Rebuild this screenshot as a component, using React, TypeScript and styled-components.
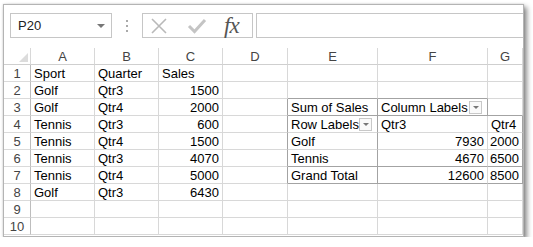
import React from 'react';
import styled, { createGlobalStyle } from 'styled-components';

const GlobalStyle = createGlobalStyle`
  body {
    margin: 0;
    background: #ffffff;
    font-family: "Liberation Sans", Arial, sans-serif;
  }
`;

type Value = string | number | { text: string; filter: true };

const columns = ['A', 'B', 'C', 'D', 'E', 'F', 'G'];
const widths = [64, 64, 64, 65, 90, 110, 35];

const rows: Value[][] = [
  ['Sport', 'Quarter', 'Sales', '', '', '', ''],
  ['Golf', 'Qtr3', 1500, '', '', '', ''],
  ['Golf', 'Qtr4', 2000, '', 'Sum of Sales', { text: 'Column Labels', filter: true }, ''],
  ['Tennis', 'Qtr3', 600, '', { text: 'Row Labels', filter: true }, 'Qtr3', 'Qtr4'],
  ['Tennis', 'Qtr4', 1500, '', 'Golf', 7930, 2000],
  ['Tennis', 'Qtr3', 4070, '', 'Tennis', 4670, 6500],
  ['Tennis', 'Qtr4', 5000, '', 'Grand Total', 12600, 8500],
  ['Golf', 'Qtr3', 6430, '', '', '', ''],
  ['', '', '', '', '', '', ''],
  ['', '', '', '', '', '', ''],
];

// pivot table outline
const darkBottom = (r: number, c: number) =>
  (r === 2 && (c === 4 || c === 5)) || ((r === 3 || r === 6 || r === 7) && c >= 4);
const darkRight = (r: number, c: number) =>
  ((c === 3 || c === 4) && r >= 3 && r <= 7) || (c === 5 && r === 3) || (c === 6 && r >= 4 && r <= 7);

export default function App() {
  return (
    <>
      <GlobalStyle />
      <Window>
        <Toolbar>
          <NameBox>
            <span>P20</span>
            <Caret />
          </NameBox>
          <Grip>
            <i />
            <i />
            <i />
          </Grip>
          <FormulaButtons>
            <svg width="18" height="18" viewBox="0 0 18 18">
              <path d="M2 2 L16 16 M16 2 L2 16" stroke="#b9b9b9" strokeWidth="1.6" fill="none" />
            </svg>
            <svg width="20" height="16" viewBox="0 0 20 16">
              <path d="M2 8 L7.5 13.5 L18 2" stroke="#c4c4c4" strokeWidth="3" fill="none" />
            </svg>
            <Fx>fx</Fx>
          </FormulaButtons>
          <FormulaInput />
        </Toolbar>
        <Sheet $widths={widths}>
          <Corner>
            <CornerMark />
          </Corner>
          {columns.map((c) => (
            <ColHead key={c}>{c}</ColHead>
          ))}
          {rows.map((row, r) => (
            <React.Fragment key={r}>
              <RowHead>{r + 1}</RowHead>
              {row.map((v, c) => {
                const isNum = typeof v === 'number';
                const filter = typeof v === 'object';
                return (
                  <Cell
                    key={c}
                    $num={isNum}
                    $darkB={darkBottom(r + 1, c)}
                    $darkR={darkRight(r + 1, c)}
                  >
                    {filter ? (
                      <>
                        <span>{v.text}</span>
                        <FilterButton />
                      </>
                    ) : (
                      v
                    )}
                  </Cell>
                );
              })}
            </React.Fragment>
          ))}
        </Sheet>
      </Window>
    </>
  );
}

const Window = styled.div`
  margin: 4px 0 0 3px;
  width: 521px;
  height: 233px;
  box-sizing: border-box;
  border: 1px solid #b4b4b4;
  background: #ffffff;
  box-shadow: 3px 3px 5px rgba(0, 0, 0, 0.45), 0 0 2px rgba(0, 0, 0, 0.15);
  overflow: hidden;
`;

const Toolbar = styled.div`
  display: flex;
  align-items: center;
  height: 25px;
  padding: 8px 0 0 6px;
  margin-bottom: 10px;
`;

const NameBox = styled.div`
  width: 102px;
  height: 25px;
  box-sizing: border-box;
  border: 1px solid #c6c6c6;
  display: flex;
  align-items: center;
  justify-content: space-between;
  padding: 0 6px 0 7px;
  font-size: 13px;
  color: #222;
`;

const Caret = styled.div`
  width: 0;
  height: 0;
  border-left: 4px solid transparent;
  border-right: 4px solid transparent;
  border-top: 4px solid #777;
`;

const Grip = styled.div`
  width: 30px;
  display: flex;
  flex-direction: column;
  align-items: center;
  gap: 3px;

  i {
    width: 2px;
    height: 2px;
    background: #aaa;
  }
`;

const FormulaButtons = styled.div`
  width: 111px;
  height: 25px;
  box-sizing: border-box;
  border: 1px solid #c6c6c6;
  display: flex;
  align-items: center;
  gap: 19px;
  padding-left: 7px;
`;

const Fx = styled.span`
  font-family: "Liberation Serif", "Times New Roman", serif;
  font-style: italic;
  font-size: 23px;
  line-height: 23px;
  color: #555;
  letter-spacing: -1px;
  margin-left: -2px;
`;

const FormulaInput = styled.div`
  flex: 1;
  height: 25px;
  box-sizing: border-box;
  margin-left: 3px;
  border: 1px solid #c6c6c6;
  border-right: none;
`;

const Sheet = styled.div<{ $widths: number[] }>`
  display: grid;
  grid-template-columns: 27px ${(p) => p.$widths.map((w) => `${w}px`).join(' ')};
  grid-auto-rows: 17px;
  font-size: 13px;
`;

const HeadBase = styled.div`
  box-sizing: border-box;
  border-right: 1px solid #d8d8d8;
  border-bottom: 1px solid #cfcfcf;
  color: #444;
  line-height: 17px;
  text-align: center;
`;

const Corner = styled(HeadBase)`
  position: relative;
`;

const CornerMark = styled.div`
  position: absolute;
  right: 2px;
  bottom: 2px;
  width: 0;
  height: 0;
  border-left: 9px solid transparent;
  border-bottom: 9px solid #dcdcdc;
`;

const ColHead = styled(HeadBase)``;

const RowHead = styled(HeadBase)`
  border-right-color: #bdbdbd;
  border-bottom-color: #dadada;
`;

const Cell = styled.div<{ $num: boolean; $darkB: boolean; $darkR: boolean }>`
  box-sizing: border-box;
  border-right: 1px solid ${(p) => (p.$darkR ? '#a3a3a3' : '#d8d8d8')};
  border-bottom: 1px solid ${(p) => (p.$darkB ? '#a3a3a3' : '#d8d8d8')};
  display: flex;
  align-items: center;
  justify-content: ${(p) => (p.$num ? 'flex-end' : 'space-between')};
  padding: 1px 3px 0 3px;
  line-height: 16px;
  color: #000;
  white-space: nowrap;
  overflow: hidden;
`;

const FilterButton = styled.div`
  width: 13px;
  height: 13px;
  box-sizing: border-box;
  border: 1px solid #c8c8c8;
  background: #fafafa;
  margin-right: 2px;
  display: flex;
  align-items: center;
  justify-content: center;

  &::after {
    content: '';
    width: 0;
    height: 0;
    border-left: 3px solid transparent;
    border-right: 3px solid transparent;
    border-top: 3px solid #777;
  }
`;
